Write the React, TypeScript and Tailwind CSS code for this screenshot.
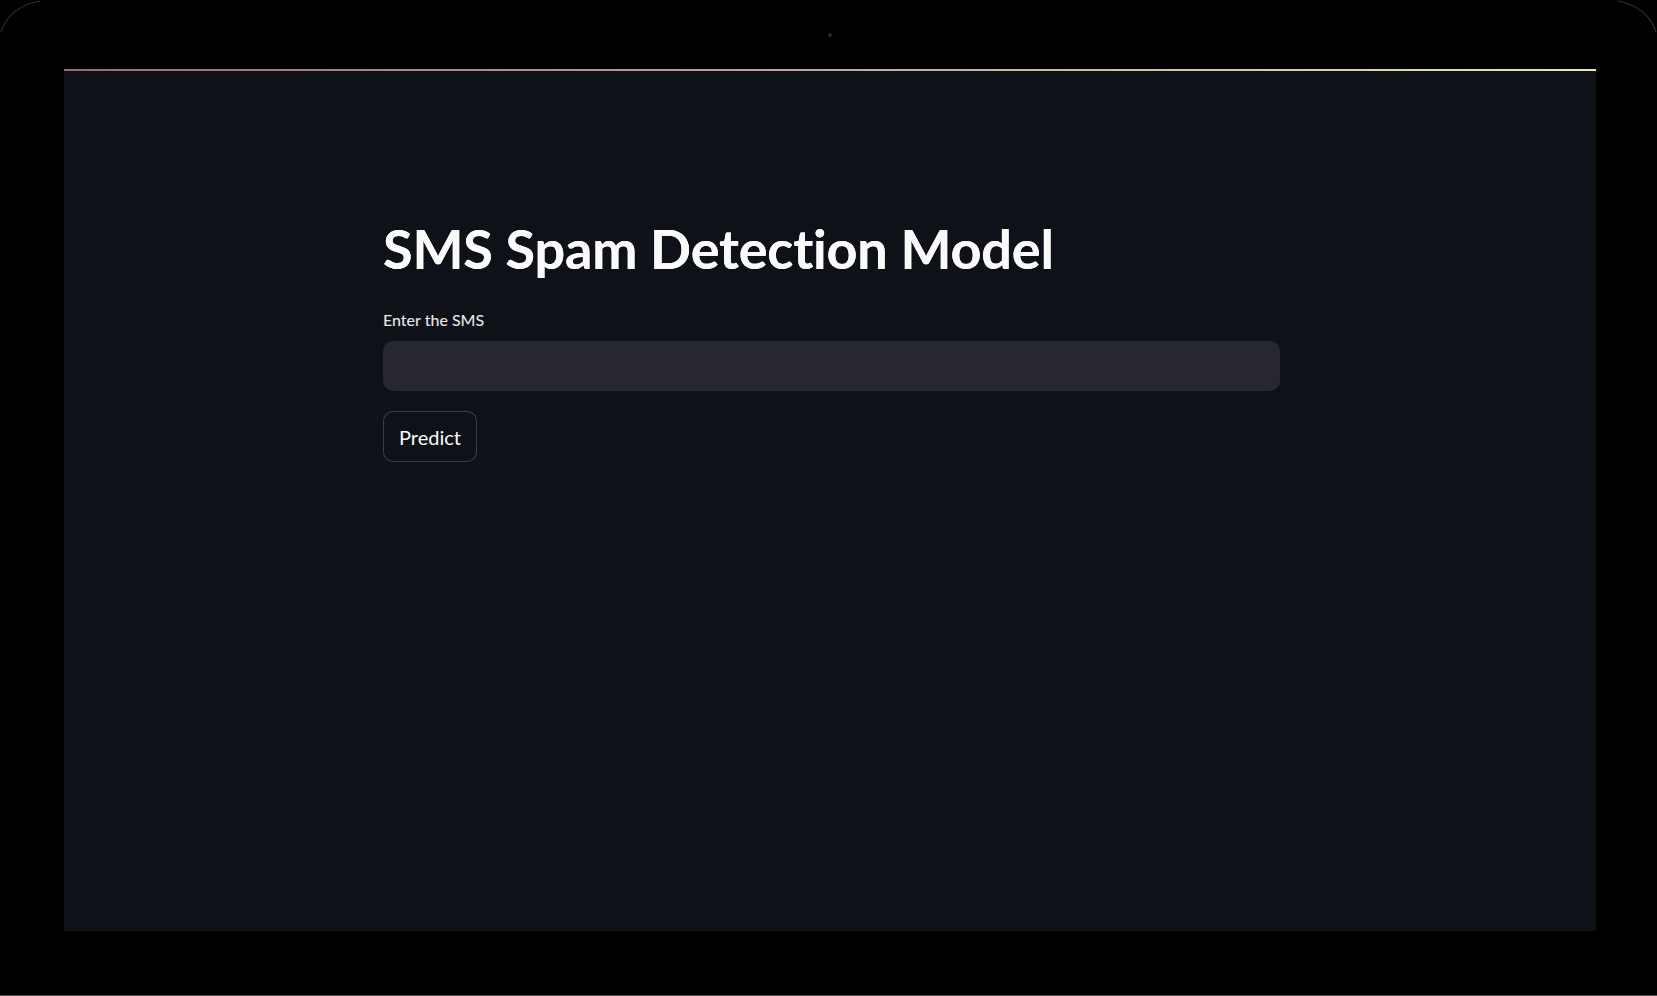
import { useState } from "react"

function CornerArc({ side }: { side: "left" | "right" }) {
  return (
    <svg
      className={
        side === "left" ? "absolute left-0 top-0" : "absolute right-0 top-0 -scale-x-100"
      }
      width="60"
      height="40"
      viewBox="0 0 60 40"
    >
      <path d="M1 32 C 6 16, 20 4, 40 1" fill="none" stroke="#2e2e2e" strokeWidth="1.2" />
    </svg>
  )
}

export default function App() {
  const [sms, setSms] = useState("")

  return (
    <div
      className="relative h-[996px] w-[1657px] overflow-hidden bg-black"
      style={{ fontFamily: "Lato, 'Noto Sans', sans-serif" }}
    >
      <CornerArc side="left" />
      <CornerArc side="right" />
      <div className="absolute left-[828px] top-[33px] h-[4px] w-[4px] rounded-full bg-[#2a2a2a]" />

      <div className="flex flex-col pl-16 pt-[69px]">
        <main className="flex h-[862px] w-[1532px] flex-col bg-[#0e1117]">
          <div className="h-[2px] w-full bg-gradient-to-r from-[#94706a] via-[#c4a898] to-[#efe6a8]" />

          <div className="flex flex-col pl-[319px] pt-[146px]">
            <h1 className="whitespace-nowrap text-[54px] font-bold leading-[64px] tracking-[-0.2px] text-[#fafafa] [text-shadow:0_0_0.6px_#fafafa]">
              SMS Spam Detection Model
            </h1>

            <label className="mt-[29px] text-[16px] font-medium leading-[20px] text-[#e6e6e6]">
              Enter the SMS
            </label>
            <input
              value={sms}
              onChange={(e) => setSms(e.target.value)}
              className="mt-[11px] h-[50px] w-[897px] rounded-[10px] bg-[#262730] px-4 text-[18px] text-[#fafafa] outline-none"
            />

            <button className="mt-[20px] h-[51px] w-[94px] rounded-[10px] border border-[#fafafa]/20 bg-[#0e1117] text-[20px] text-[#fafafa]">
              Predict
            </button>
          </div>
        </main>
      </div>

      <div className="absolute bottom-0 left-0 h-px w-full bg-[#4a4a4a]" />
    </div>
  )
}
